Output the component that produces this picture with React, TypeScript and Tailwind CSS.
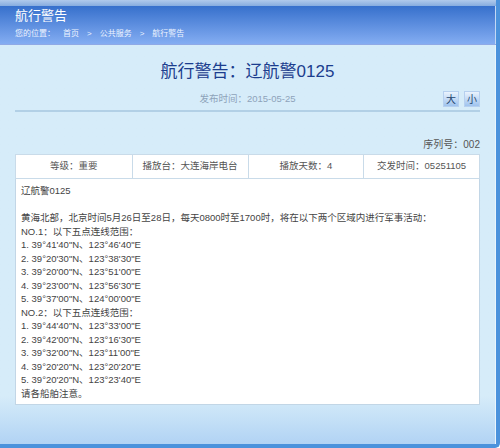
const lines = [
  "辽航警0125",
  "",
  "黄海北部，北京时间5月26日至28日，每天0800时至1700时，将在以下两个区域内进行军事活动：",
  "NO.1：以下五点连线范围：",
  "1. 39°41'40\"N、123°46'40\"E",
  "2. 39°20'30\"N、123°38'30\"E",
  "3. 39°20'00\"N、123°51'00\"E",
  "4. 39°23'00\"N、123°56'30\"E",
  "5. 39°37'00\"N、124°00'00\"E",
  "NO.2：以下五点连线范围：",
  "1. 39°44'40\"N、123°33'00\"E",
  "2. 39°42'00\"N、123°16'30\"E",
  "3. 39°32'00\"N、123°11'00\"E",
  "4. 39°20'20\"N、123°20'20\"E",
  "5. 39°20'20\"N、123°23'40\"E",
  "请各船舶注意。",
];

const cells = ["等级：重要", "播放台：大连海岸电台", "播放天数：4", "交发时间：05251105"];

export default function App() {
  return (
    <div className="w-[500px] h-[448px] overflow-hidden bg-white font-['Liberation_Sans','Noto_Sans_CJK_SC',sans-serif]">
      <div className="w-full h-full flex flex-col border-r-[4px] border-b-[4px] border-[#4b92dc] rounded-br-[5px] overflow-hidden">
        {/* header */}
        <div className="h-[45px] shrink-0 flex flex-col border-b border-[#8fa9e6]">
          <div className="h-[6px] bg-gradient-to-b from-[#b0caec] to-[#86acdf]" />
          <div className="flex-1 bg-gradient-to-b from-[#3670cc] to-[#84adf2] border-r border-[#c3d8f5] px-[15px]">
            <div className="text-[13px] leading-[16px] text-white pt-[2px]">航行警告</div>
            <div className="flex items-center gap-[8px] text-[8px] leading-[12px] text-[#eef4ff] mt-[4px]">
              <span>您的位置：</span>
              <span>首页</span>
              <span>&gt;</span>
              <span>公共服务</span>
              <span>&gt;</span>
              <span>航行警告</span>
            </div>
          </div>
        </div>

        {/* content */}
        <div className="flex-1 bg-gradient-to-b from-[#d6ecf9] via-[#d6ecf9] via-[88%] to-[#b1d3f4] border-r border-[#eaf5fd] px-[15px]">
          <h1 className="mt-[15px] text-center text-[17px] leading-[24px] text-[#1b3d8e]">
            航行警告：辽航警0125
          </h1>

          <div className="mt-[7px] grid grid-cols-[1fr_auto_1fr] items-center pb-[3px] border-b-2 border-[#b2d0e6]">
            <div />
            <div className="text-[9.5px] leading-[16px] text-[#8ea3ba]">发布时间：2015-05-25</div>
            <div className="flex justify-end gap-[5px]">
              <button className="w-[16px] h-[16px] flex items-center justify-center text-[10px] text-[#25466f] bg-gradient-to-b from-[#eaf3fd] to-[#9fc3ee] border border-[#b6d0ef]">
                大
              </button>
              <button className="w-[16px] h-[16px] flex items-center justify-center text-[10px] text-[#25466f] bg-gradient-to-b from-[#eaf3fd] to-[#9fc3ee] border border-[#b6d0ef]">
                小
              </button>
            </div>
          </div>

          <div className="mt-[26px] text-right text-[10px] leading-[14px] text-[#555]">序列号：002</div>

          <div className="mt-[2px] grid grid-cols-4 bg-white border border-[#c9dbe9]">
            {cells.map((c, i) => (
              <div
                key={c}
                className={`h-[23px] flex items-center justify-center text-[9.5px] text-[#555] ${i > 0 ? "border-l border-[#c9dbe9]" : ""}`}
              >
                {c}
              </div>
            ))}
          </div>

          <div className="bg-white border border-t-0 border-[#c2d6e6] px-[5px] pt-[5px] pb-[4px] text-[9.5px] leading-[13.5px] text-[#444]">
            {lines.map((l, i) => (
              <div key={i} className="h-[13.5px] whitespace-nowrap">
                {l}
              </div>
            ))}
          </div>
        </div>
      </div>
    </div>
  );
}
